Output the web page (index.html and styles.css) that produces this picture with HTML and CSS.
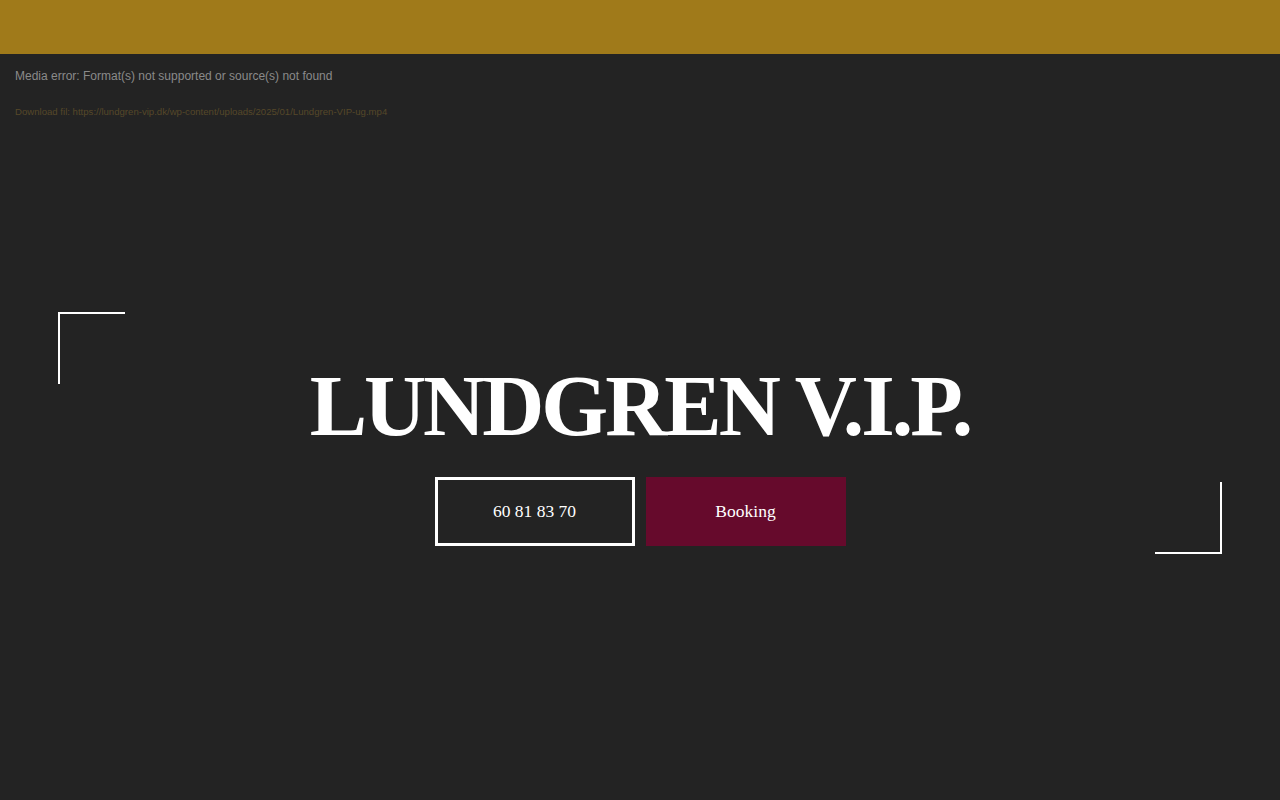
FILE: index.html
```html
<!DOCTYPE html>
<html lang="da">
<head>
  <meta charset="UTF-8" />
  <title>Lundgren V.I.P.</title>
  <link rel="stylesheet" href="styles.css">
</head>
<body>

  <header class="topbar"></header>

  <section class="hero">
    <div class="media-error">
      <p class="error-msg">Media error: Format(s) not supported or source(s) not found</p>
      <a class="download" href="#">Download fil: https://lundgren-vip.dk/wp-content/uploads/2025/01/Lundgren-VIP-ug.mp4</a>
    </div>

    <div class="frame">
      <span class="corner corner-tl"></span>
      <div class="hero-content">
        <h1>LUNDGREN V.I.P.</h1>
        <div class="actions">
          <a class="btn btn-outline" href="#">60 81 83 70</a>
          <a class="btn btn-fill" href="#">Booking</a>
        </div>
      </div>
      <span class="corner corner-br"></span>
    </div>
  </section>

</body>
</html>
```

FILE: styles.css
```css
* {
  margin: 0;
  padding: 0;
  box-sizing: border-box;
}

body {
  background: #232323;
  color: #fff;
  font-family: 'Liberation Serif', serif;
  height: 800px;
  overflow: hidden;
}

.topbar {
  height: 54px;
  background: #a07a1a;
}

.hero {
  position: relative;
  height: 746px;
}

.media-error {
  padding: 14px 15px 0;
  font-family: 'Liberation Sans', Arial, sans-serif;
}

.error-msg {
  font-size: 12px;
  line-height: 16px;
  color: #8a8a8a;
}

.download {
  display: block;
  margin-top: 21px;
  font-size: 9.6px;
  line-height: 13px;
  color: #564829;
  text-decoration: none;
}

.frame {
  position: relative;
  margin: 194px 58px 0;
  height: 242px;
}

.corner {
  position: absolute;
  width: 67px;
  height: 72px;
}

.corner-tl {
  top: 0;
  left: 0;
  border-top: 2px solid #fff;
  border-left: 2px solid #fff;
}

.corner-br {
  bottom: 0;
  right: 0;
  border-bottom: 2px solid #fff;
  border-right: 2px solid #fff;
}

.hero-content {
  padding-top: 51px;
  text-align: center;
}

.hero-content h1 {
  font-size: 86px;
  font-weight: bold;
  line-height: 86px;
  letter-spacing: -3px;
}

.actions {
  display: flex;
  justify-content: center;
  gap: 11px;
  margin-top: 28px;
}

.btn {
  display: flex;
  align-items: center;
  justify-content: center;
  width: 200px;
  height: 69px;
  font-size: 17.5px;
  color: #fff;
  text-decoration: none;
}

.btn-outline {
  border: 3px solid #fff;
}

.btn-fill {
  background: #660a2c;
}
```
